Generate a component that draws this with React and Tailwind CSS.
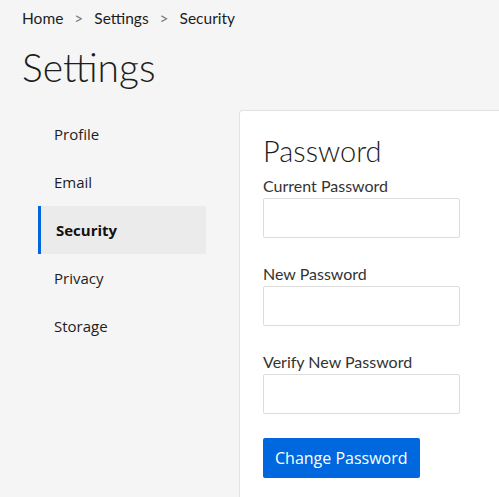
import React from "react";

const navItems = ["Profile", "Email", "Security", "Privacy", "Storage"];
const fields = ["Current Password", "New Password", "Verify New Password"];

function App() {
  return (
    <div className="min-h-screen bg-[#f5f5f5] text-[#222] font-['Lato','Liberation_Sans',sans-serif] overflow-hidden">
      {/* breadcrumb */}
      <div className="px-[22px] pt-[7px] text-[15.5px] leading-[22px] text-[#1d1d1d]">
        Home <span className="mx-[7px] text-[#777]">&gt;</span> Settings{" "}
        <span className="mx-[7px] text-[#777]">&gt;</span> Security
      </div>
      <h1 className="px-[22px] mt-[15px] text-[39px] leading-[46px] font-light text-[#1d1d1d]">Settings</h1>

      <div className="flex mt-[20px]">
        <nav className="ml-[38px] w-[168px] flex flex-col font-['Open_Sans','Noto_Sans',sans-serif] text-[15px]">
          {navItems.map((item) =>
            item === "Security" ? (
              <div
                key={item}
                className="h-[48px] flex items-center pl-[15px] border-l-[3px] border-[#0066dd] bg-[#ebebeb] font-bold text-[#111]"
              >
                {item}
              </div>
            ) : (
              <div key={item} className="h-[48px] flex items-center pl-[16px] text-[#1d1d1d]">
                {item}
              </div>
            )
          )}
        </nav>

        <div className="ml-[33px] flex-1 bg-white border border-[#e2e2e2] border-r-0 rounded-tl-[4px] pl-[23px] pt-[22px] pb-[40px]">
          <h2 className="text-[29px] leading-[36px] font-light text-[#1d1d1d]">Password</h2>
          <div className="flex flex-col mt-[6px]">
            {fields.map((f) => (
              <div key={f} className="mb-[25px] last:mb-[24px]">
                <label className="block text-[16px] leading-[22px] text-[#333]">{f}</label>
                <input
                  type="password"
                  className="mt-[1px] block w-[197px] h-[40px] border border-[#dcdcdc] rounded-[2px] bg-white"
                />
              </div>
            ))}
          </div>
          <button className="h-[40px] px-[12px] bg-[#0068de] text-white text-[16px] rounded-[2px] font-['Open_Sans','Noto_Sans',sans-serif]">
            Change Password
          </button>
        </div>
      </div>
    </div>
  );
}

export default App;
